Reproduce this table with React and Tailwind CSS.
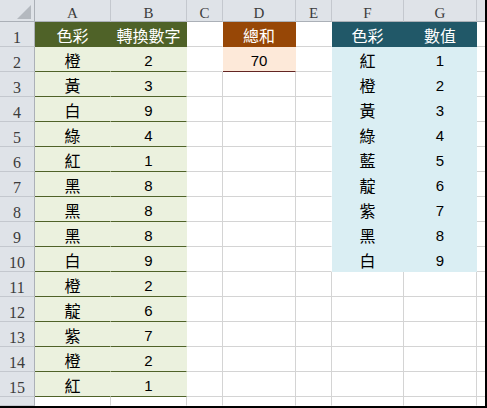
import React from "react";

const colA = ["色彩", "橙", "黃", "白", "綠", "紅", "黑", "黑", "黑", "白", "橙", "靛", "紫", "橙", "紅"];
const colB = ["轉換數字", "2", "3", "9", "4", "1", "8", "8", "8", "9", "2", "6", "7", "2", "1"];
const colF = ["色彩", "紅", "橙", "黃", "綠", "藍", "靛", "紫", "黑", "白"];
const colG = ["數值", "1", "2", "3", "4", "5", "6", "7", "8", "9"];

const letters = ["A", "B", "C", "D", "E", "F", "G"];

const cjk = "font-['Noto_Sans_CJK_TC',sans-serif] text-[16px] leading-none pb-[3px]";
const num = "font-['Liberation_Sans',Arial,sans-serif] text-[15px] leading-none pb-[3px]";

function Cell({ className = "", text, kind }) {
  return (
    <div className={`flex items-end justify-center border-r border-b overflow-hidden ${className}`}>
      {text != null && <span className={kind === "num" ? num : cjk}>{text}</span>}
    </div>
  );
}

function rowCells(r) {
  const i = r - 1;
  const cells = [];

  // A, B
  if (r === 1) {
    cells.push(<Cell key="A" text={colA[i]} className="bg-[#4f6228] border-r-[#4f6228] border-b-[#4f6228] text-white" />);
    cells.push(<Cell key="B" text={colB[i]} className="bg-[#4f6228] border-r-[#4f6228] border-b-[#4f6228] text-white" />);
  } else if (r <= 15) {
    cells.push(<Cell key="A" text={colA[i]} className="bg-[#ebf1de] border-r-[#ebf1de] border-b-[#4f6228] text-black" />);
    cells.push(<Cell key="B" text={colB[i]} kind="num" className="bg-[#ebf1de] border-r-[#ebf1de] border-b-[#4f6228] text-black" />);
  } else {
    cells.push(<Cell key="A" className="border-r-[#d4d4d4] border-b-transparent" />);
    cells.push(<Cell key="B" className="border-r-[#d4d4d4] border-b-transparent" />);
  }

  // C
  cells.push(
    <Cell
      key="C"
      className={`${r <= 2 ? "border-r-white" : "border-r-[#d4d4d4]"} ${r === 16 ? "border-b-transparent" : "border-b-[#d4d4d4]"}`}
    />
  );

  // D
  if (r === 1) {
    cells.push(<Cell key="D" text="總和" className="bg-[#974706] border-r-[#974706] border-b-[#974706] text-white" />);
  } else if (r === 2) {
    cells.push(<Cell key="D" text="70" kind="num" className="bg-[#fde9d9] border-r-[#fde9d9] border-b-[#632523] text-black" />);
  } else {
    cells.push(<Cell key="D" className={`border-r-[#d4d4d4] ${r === 16 ? "border-b-transparent" : "border-b-[#d4d4d4]"}`} />);
  }

  // E
  cells.push(
    <Cell
      key="E"
      className={`${r <= 10 ? "border-r-white" : "border-r-[#d4d4d4]"} ${r === 16 ? "border-b-transparent" : "border-b-[#d4d4d4]"}`}
    />
  );

  // F, G
  if (r === 1) {
    cells.push(<Cell key="F" text={colF[i]} className="bg-[#215868] border-r-[#215868] border-b-[#215868] text-white" />);
    cells.push(<Cell key="G" text={colG[i]} className="bg-[#215868] border-r-[#215868] border-b-[#215868] text-white" />);
  } else if (r <= 10) {
    cells.push(<Cell key="F" text={colF[i]} className="bg-[#daeef3] border-r-[#daeef3] border-b-[#daeef3] text-black" />);
    cells.push(<Cell key="G" text={colG[i]} kind="num" className="bg-[#daeef3] border-r-[#daeef3] border-b-[#daeef3] text-black" />);
  } else {
    cells.push(<Cell key="F" className={`border-r-[#d4d4d4] ${r === 16 ? "border-b-transparent" : "border-b-[#d4d4d4]"}`} />);
    cells.push(<Cell key="G" className={`border-r-[#d4d4d4] ${r === 16 ? "border-b-transparent" : "border-b-[#d4d4d4]"}`} />);
  }

  // partial H
  cells.push(<div key="H" className={`border-b ${r === 16 ? "border-b-transparent" : "border-b-[#d4d4d4]"}`} />);

  return cells;
}

export default function App() {
  const rows = Array.from({ length: 16 }, (_, k) => k + 1);

  return (
    <div className="w-[487px] h-[408px] bg-white border-r-2 border-b-2 border-black overflow-hidden">
      <div className="grid h-full grid-cols-[35px_76px_76px_36px_73px_36px_72px_73px_1fr] grid-rows-[22px_repeat(15,25px)_1fr]">
        {/* corner */}
        <div className="relative bg-[#dfe3e8] border-r border-b border-r-[#abb0b7] border-b-[#abb0b7]">
          <svg className="absolute left-[17px] top-[5px]" width="15" height="15" viewBox="0 0 15 15">
            <polygon points="14,0 14,14 0,14" fill="#b4b9bf" />
          </svg>
        </div>

        {/* column headers */}
        {letters.map((l) => (
          <div
            key={l}
            className="flex items-end justify-center bg-[#dfe3e8] border-r border-b border-r-[#c4c8ce] border-b-[#abb0b7] font-['Liberation_Serif',serif] text-[15px] leading-none text-[#3c3c3c]"
          >
            {l}
          </div>
        ))}
        <div className="bg-[#dfe3e8] border-b border-b-[#abb0b7]" />

        {rows.map((r) => (
          <React.Fragment key={r}>
            <div className="flex items-end justify-center bg-[#dfe3e8] border-r border-b border-r-[#abb0b7] border-b-[#c4c8ce] font-['Liberation_Serif',serif] text-[16px] leading-none text-[#3c3c3c]">
              {r <= 15 ? r : ""}
            </div>
            {rowCells(r)}
          </React.Fragment>
        ))}
      </div>
    </div>
  );
}
